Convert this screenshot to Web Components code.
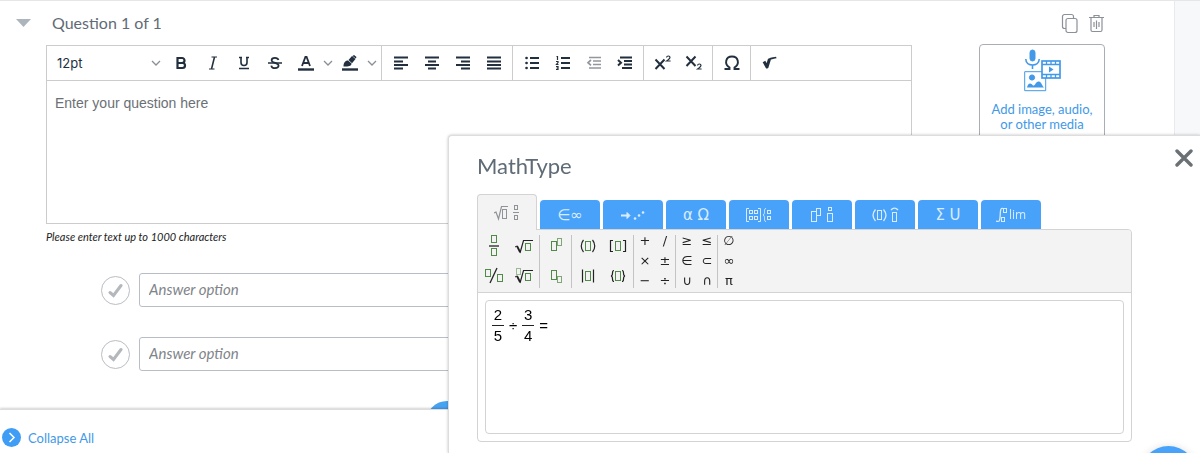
<!DOCTYPE html>
<html lang="en">
<head>
<meta charset="utf-8">
<title>Question editor</title>
<style>
html, body { height: 100%; }
body {
    margin: 0;
    display: flex;
    flex-direction: column;
    overflow: hidden;
    background: #fff;
    color: #5f6b76;
    font-family: Lato, "Liberation Sans", sans-serif;
}
</style>
</head>
<body>

<question-page>
    <question-card heading="Question 1 of 1">
        <rich-editor></rich-editor>
        <answer-list slot="answers">
            <answer-option name="answer1"></answer-option>
            <answer-option name="answer2"></answer-option>
        </answer-list>
    </question-card>
    <media-card slot="media">Add image, audio,<br>or other media</media-card>
</question-page>
<page-footer>Collapse All</page-footer>
<math-dialog heading="MathType"></math-dialog>
<help-button></help-button>

<script>
const svg = (w, h, body) => `<svg width="${w}" height="${h}" viewBox="0 0 ${w} ${h}" fill="none" stroke="currentColor" aria-hidden="true">${body}</svg>`;

const lines = (rows) => svg(16, 16, `<path stroke-width="2" d="${rows}"/>`);

const ICONS = {
    bold: svg(13, 14, '<path stroke-width="2.200" d="M2.500 2h4.500a2.500 2.500 0 0 1 0 5H2.500zM2.500 7H7.500a2.500 2.500 0 0 1 0 5H2.500z"/>'),
    italic: svg(12, 14, '<path stroke-width="1" d="M4.500 1H10M2 13h5.500"/><path stroke-width="1.600" d="M7.500 1 4.500 13"/>'),
    underline: svg(12, 14, '<path stroke-width="1.600" d="M3 1v5.500a3 3 0 0 0 6 0V1M1 1.500h3M8 1.500h3M1 12.500h10"/>'),
    strike: svg(14, 14, '<path stroke-width="1.700" d="M10.500 4C10 2.500 8.700 1.800 7 1.800 5 1.800 3.600 2.800 3.600 4.200 3.600 7.500 10.600 6.200 10.600 9.600c0 1.600-1.500 2.600-3.600 2.600S3.500 11.200 3.300 9.600"/><path stroke-width="1.500" d="M0 7h14"/>'),
    textColor: svg(16, 16, '<path stroke-width="1.800" d="M4 11 7.400 2h1.200L12 11M5.500 8h5"/><path stroke-width="2.400" d="M0 14.500h16"/>'),
    highlight: svg(16, 16, '<path fill="currentColor" stroke="none" d="M1.500 11.500c0-3.500 1.500-6 4.500-6L9.500 8.500c0 2-2 3.500-8 3zM6.500 5l3.500-4 3.500 3L10 8.200zM10.500 1 12 0l2.500 2-.7 1.500z"/><path stroke-width="2.400" d="M0 14.500h16"/>'),
    caret: svg(10, 6, '<path stroke="#8a8f96" stroke-width="1.300" d="m1 1 4 4 4-4"/>'),
    left: lines("M1 2.500h14M1 6.500h9M1 10h14M1 13.500h9"),
    center: lines("M1 2.500h14M4 6.500h8M1 10h14M4 13.500h8"),
    right: lines("M1 2.500h14M6 6.500h9M1 10h14M6 13.500h9"),
    justify: lines("M1 2.500h14M1 6.500h14M1 10h14M1 13.500h14"),
    bullets: svg(16, 16, '<path stroke-width="2" d="M6 3h9M6 8h9M6 13h9"/><path stroke-width="2.600" stroke-linecap="round" d="M2.500 3h.1M2.500 8h.1M2.500 13h.1"/>'),
    numbers: svg(16, 16, '<path stroke-width="2" d="M6 3h9M6 8h9M6 13h9"/><path stroke-width="1.200" d="M1.500 1.500h1V5M1 6.500h2v1L1.500 9.500H3.500M1 11.500h2v3H1M1.500 13H3"/>'),
    outdent: svg(16, 16, '<path stroke="#93979c" stroke-width="1.700" d="M3 2.500h12M7 6h8M7 9.500h8M3 13h12M5 5 2 7.700l3 2.700"/>'),
    indent: svg(16, 16, '<path stroke-width="2" d="M3 2.500h12M7 6h8M7 9.500h8M5 13h10M1 5l3 2.700-3 2.700"/>'),
    sup: svg(18, 16, '<path stroke-width="2" d="m1.500 4.500 9 9.500M10.500 4.500l-9 9.500"/><path stroke-width="1.200" d="M12.500 2.500c.3-2 3.500-2 3.500 0 0 1.200-1.500 2-3.400 3.500h4"/>'),
    sub: svg(18, 16, '<path stroke-width="2" d="m1.500 1.500 9 9.500M10.500 1.500l-9 9.500"/><path stroke-width="1.200" d="M12.500 10.500c.3-2 3.500-2 3.500 0 0 1.200-1.500 2-3.400 3.500h4"/>'),
    omega: svg(16, 16, '<path stroke-width="1.900" d="M.5 14h5v-1.500C0 9 1.500 1.500 8 1.500s8 7.500 2.500 11V14h5"/>'),
    root: svg(16, 16, '<path stroke-width="3" stroke-linejoin="round" d="M2 6.500 5 12 7.500 4"/><path stroke-width="1.700" d="M7.300 4.200c2-1.200 4-.8 7-1.700"/>')
};

// empty slot used in the formula glyphs
const box = (x, y, w = 5, h = 7, c = "#4f8a47") => `<rect x="${x}" y="${y}" width="${w}" height="${h}" stroke="${c}"/>`;
const C = "currentColor";

const FORMULAS = {
    fraction: svg(20, 24, box(7.5, 1.5) + '<path stroke-width="1.300" d="M5 12h10"/>' + box(7.5, 14.5)),
    sqrt: svg(20, 20, '<path d="m1 11 2-1"/><path stroke-width="1.800" d="m3 10 3 6"/><path stroke-width="1.200" d="M6 17 9.500 4.500H19"/>' + box(11.5, 7.5)),
    slash: svg(22, 20, box(2.5, 3.5) + '<path stroke-width="1.300" d="M14 2 7 17"/>' + box(14.5, 8.5)),
    nroot: svg(20, 20, box(2.5, 2.5, 4, 6, "#9bb897") + '<path d="m1 11 2-1"/><path stroke-width="1.800" d="m3 10 3 6"/><path stroke-width="1.200" d="M6 17 9.500 4.500H19"/>' + box(11.5, 7.5)),
    power: svg(20, 20, box(5.5, 5.5, 5, 9) + box(11.5, 2.5, 4, 7, "#7fa579")),
    index: svg(20, 20, box(5.5, 4.5, 5, 9) + box(11.5, 10.5, 4, 6, "#7fa579")),
    parens: svg(20, 20, '<path stroke-width="1.200" d="M5.500 4C2.500 7.500 2.500 12.500 5.500 16M14.500 4c3 3.500 3 8.500 0 12"/>' + box(7.5, 5.5, 5, 9)),
    brackets: svg(20, 20, '<path stroke-width="1.200" d="M5 4.500H2.500v11H5M15 4.500h2.500v11H15"/>' + box(7.5, 5.5, 5, 9)),
    bars: svg(20, 20, '<path stroke-width="1.200" d="M4.500 3.500v13M15.500 3.500v13"/>' + box(7.5, 5.5, 5, 9)),
    braces: svg(20, 20, '<path stroke-width="1.200" d="M6 4.500c-3 0 0 5-3 5.500 3 .5 0 5.500 3 5.500M14 4.500c3 0 0 5 3 5.500-3 .5 0 5.500-3 5.500"/>' + box(7.5, 5.5, 5, 9))
};

const TABS = [
    { label: "General", face: svg(26, 18, '<path stroke-width="1.200" d="m0 9 2-1 2.500 7L7.500 2.500H14"/>' + box(8.5, 5.5, 4, 9, C) + box(20.5, 1.5, 3, 4, C) + '<path d="M19 8.500h6"/>' + box(20.5, 11.5, 3, 4, C)) },
    { label: "Symbols", face: "<span>∈∞</span>" },
    { label: "Arrows", face: svg(26, 18, '<path stroke-width="2" d="M1 9.500h7"/><path fill="currentColor" d="m7 6.500 3 3-3 3z"/><path stroke-width="2.600" stroke-linecap="round" d="M15 12.500h.1M19 9.500h.1M23 6.500h.1"/>') },
    { label: "Greek and letters", face: "<span>α Ω</span>" },
    { label: "Matrices", face: svg(28, 18, '<path d="M4 2.500H1.500v13H4M13 2.500h2.500v13H13"/>' + box(4.5, 4.5, 3, 3, C) + box(9.5, 4.5, 3, 3, C) + box(4.5, 10.5, 3, 3, C) + box(9.5, 10.5, 3, 3, C) + '<path d="M21 2.500c-3 0 0 5.500-3 6.500 3 1 0 6.500 3 6.500"/>' + box(22.5, 4.5, 3, 3, C) + box(22.5, 10.5, 3, 3, C)) },
    { label: "Scripts and layout", face: svg(24, 18, box(1.5, 5.5, 5, 10, C) + box(6.5, 2.5, 4, 7, C) + box(18.5, 1.5, 3, 3, C) + box(17.5, 7.5, 5, 8, C)) },
    { label: "Brackets and accents", face: svg(28, 18, '<path stroke-width="1.300" d="M4.500 3.500c-3 3.500-3 8 0 11.500M12.500 3.500c3 3.500 3 8 0 11.500"/>' + box(6.5, 4.5, 4, 9, C) + '<path stroke-width="1.300" d="M20 4c2-2.500 5-2.500 7 0"/>' + box(21.5, 6.5, 4, 9, C)) },
    { label: "Big operators", face: "<span>Σ U</span>" },
    { label: "Calculus", face: svg(12, 18, '<path stroke-width="1.300" d="M7 2.500c-4-1.500-2 8-3.500 12C3 15.500 1.500 15.500 0 15"/>' + box(7.5, 2.5, 3, 4, C) + box(5.5, 11.5, 3, 4, C)) + '<small>lim</small>' }
];

const define = (name, html) => {
    customElements.define(name, class extends HTMLElement {
        constructor() {
            super();
            this.attachShadow({ mode: "open" });
        }
        connectedCallback() {
            this.shadowRoot.innerHTML = typeof html === "function" ? html(this) : html;
        }
    });
};

define("question-page", `
<style>
:host {
    flex: 1;
    min-height: 0;
    display: flex;
    overflow: hidden;
    box-sizing: border-box;
    border-top: 1px solid #e6e6e6;
}
.main { flex: 1; display: flex; }
.left { flex: 1; max-width: 912px; }
.right { margin-left: auto; padding-right: 69px; }
.rail { width: 25px; background: #f7f8fa; border-left: 1px solid #e8eaed; }
.actions { display: flex; gap: 11px; justify-content: flex-end; padding: 12px 1px 8px 0; height: 23px; }
.actions button { border: 0; padding: 0; background: none; color: #8b9198; }
</style>
<div class="main">
    <div class="left"><slot></slot></div>
    <div class="right">
        <div class="actions">
            <button aria-label="Duplicate">${svg(17, 21, '<path stroke-width="1.200" d="M12.500 5V3.500a2 2 0 0 0-2-2h-7a2 2 0 0 0-2 2v10a2 2 0 0 0 2 2H5"/><rect x="5" y="5.500" width="11" height="14" rx="2" stroke-width="1.200"/>')}</button>
            <button aria-label="Delete">${svg(15, 21, '<path stroke-width="1.200" d="M0 4.500h15M5 4V2.500h5V4M2 4.500v12.500a1.500 1.500 0 0 0 1.500 1.500h8A1.500 1.500 0 0 0 13 17V4.500M5 9v5M7.500 7.500v8.500M10 9v5"/>')}</button>
        </div>
        <slot name="media"></slot>
    </div>
</div>
<div class="rail"></div>
`);

define("question-card", (el) => `
<style>
:host { display: block; }
header { display: flex; align-items: center; gap: 21px; height: 44px; padding-left: 16px; }
header button { border: 0; padding: 0; width: 15px; height: 8px; background: #adb5bc; clip-path: polygon(0 0, 100% 0, 50% 100%); }
h2 { margin: 0; font-size: 16px; line-height: 20px; font-weight: 400; }
.body { padding-left: 46px; }
</style>
<header><button aria-label="Collapse question"></button><h2>${el.getAttribute("heading")}</h2></header>
<div class="body"><slot></slot><slot name="answers"></slot></div>
`);

define("tool-button", (el) => `
<style>
:host { display: flex; align-items: center; color: #222f3e; }
button { display: flex; align-items: center; justify-content: center; width: 31px; height: 34px; border: 0; padding: 0; background: none; color: inherit; }
.more { width: 13px; }
</style>
<button aria-label="${el.getAttribute("icon")}">${ICONS[el.getAttribute("icon")]}</button>
${el.hasAttribute("split") ? `<button class="more" aria-label="${el.getAttribute("icon")} options">${ICONS.caret}</button>` : ""}
`);

define("tool-group", `
<style>
:host { display: flex; align-items: center; padding: 0 3px; border-right: 1px solid #ccc; }
:host(:last-of-type) { border-right: 0; }
</style>
<slot></slot>
`);

define("rich-editor", `
<style>
:host { display: block; }
.editor { border: 1px solid #ccc; }
.toolbar { display: flex; height: 34px; border-bottom: 1px solid #ccc; }
.size { display: flex; align-items: center; width: 116px; }
select { flex: 1; appearance: none; border: 0; padding: 0 0 0 7px; background: none; color: #222f3e; font: 13px/20px Inter, sans-serif; }
.size svg { margin-right: 5px; }
textarea { display: block; box-sizing: border-box; width: 100%; height: 142px; border: 0; padding: 12px 8px; resize: none; outline: 0; background: none; font: 14px/20px "Liberation Sans", sans-serif; }
textarea::placeholder { color: #6b7075; opacity: 1; }
p { margin: 6px 0 0; font-size: 11px; line-height: 14px; font-style: italic; color: #222; }
</style>
<div class="editor">
    <div class="toolbar">
        <tool-group>
            <div class="size"><select aria-label="Font size"><option>12pt</option></select>${ICONS.caret}</div>
            <tool-button icon="bold"></tool-button>
            <tool-button icon="italic"></tool-button>
            <tool-button icon="underline"></tool-button>
            <tool-button icon="strike"></tool-button>
            <tool-button icon="textColor" split></tool-button>
            <tool-button icon="highlight" split></tool-button>
        </tool-group>
        <tool-group>
            <tool-button icon="left"></tool-button>
            <tool-button icon="center"></tool-button>
            <tool-button icon="right"></tool-button>
            <tool-button icon="justify"></tool-button>
        </tool-group>
        <tool-group>
            <tool-button icon="bullets"></tool-button>
            <tool-button icon="numbers"></tool-button>
            <tool-button icon="outdent"></tool-button>
            <tool-button icon="indent"></tool-button>
        </tool-group>
        <tool-group>
            <tool-button icon="sup"></tool-button>
            <tool-button icon="sub"></tool-button>
        </tool-group>
        <tool-group><tool-button icon="omega"></tool-button></tool-group>
        <tool-group><tool-button icon="root"></tool-button></tool-group>
    </div>
    <textarea aria-label="Question" placeholder="Enter your question here"></textarea>
</div>
<p>Please enter text up to 1000 characters</p>
`);

define("answer-list", `
<style>
:host { display: flex; flex-direction: column; gap: 30px; padding: 29px 120px 0 55px; }
button { align-self: center; flex: none; width: 42px; height: 42px; border: 0; border-radius: 50%; padding: 0; background: #48a2f2; color: #fff; }
</style>
<slot></slot>
<button aria-label="Add answer">${svg(16, 16, '<path stroke-width="2" d="M8 1v14M1 8h14"/>')}</button>
`);

define("answer-option", (el) => `
<style>
:host { display: flex; align-items: center; gap: 9px; }
button { display: flex; align-items: center; justify-content: center; flex: none; width: 29px; height: 29px; border: 1px solid #b9bec4; border-radius: 50%; padding: 0; background: #fff; color: #b4b8bd; }
input { flex: 1; min-width: 0; box-sizing: border-box; height: 34px; border: 1px solid #b9bec6; border-radius: 3px; padding: 0 9px 3px; outline: 0; font: italic 15px/20px Lato, sans-serif; }
input::placeholder { color: #808489; opacity: 1; }
</style>
<button aria-label="Mark as correct">${svg(15, 15, '<path stroke-width="3" stroke-linecap="round" d="m2 9.500 3.500 3L13 2.500"/>')}</button>
<input name="${el.getAttribute("name")}" aria-label="Answer option" placeholder="Answer option">
`);

define("media-card", `
<style>
:host { display: block; }
button { display: flex; flex-direction: column; align-items: center; gap: 10px; box-sizing: border-box; width: 126px; height: 120px; border: 1px solid #a9aeb4; border-radius: 4px; padding: 4px 0; background: #fff; color: #4299e8; font: 13px/15px Lato, sans-serif; }
</style>
<button>
${svg(37, 43, `
    <rect x="6" y="1" width="5" height="11" rx="2.500" fill="currentColor"/>
    <path stroke-width="1.600" d="M1.800 10c0 8 13.400 8 13.400 0M8.500 16v4"/>
    <path fill="#fff" d="M.7 22.700h21v19h-21z"/>
    <circle cx="8" cy="28.500" r="2.600" fill="currentColor"/>
    <path fill="currentColor" stroke="none" d="M3 38.500c1-5 4-5 6-2 2 1 3-5 6-4 2 0 3 4 5 6z"/>
    <rect x="18" y="12" width="18" height="17" fill="#fff" stroke-width="1.700"/>
    <path stroke-width="1.300" d="M18 15.500h18M18 25.500h18M22.500 12v3M27 12v3M31.500 12v3M22.500 26v3M27 26v3M31.500 26v3"/>
    <path fill="currentColor" stroke="none" d="m25 17.500 4.500 3-4.500 3z"/>`)}
    <span><slot></slot></span>
</button>
`);

define("page-footer", `
<style>
:host { position: relative; display: flex; align-items: center; flex: none; height: 44px; background: #fff; border-top: 1px solid #ddd; box-shadow: 0 -1px 2px rgba(0, 0, 0, 0.18); box-sizing: border-box; }
a { display: flex; align-items: center; gap: 7px; padding: 12px 0 0 2px; color: #4299e8; font-size: 13px; line-height: 18px; text-decoration: none; }
</style>
<a href="#">${svg(19, 19, '<circle cx="9.500" cy="9.500" r="9.500" fill="#3f9df5" stroke="none"/><path stroke="#fff" stroke-width="1.500" d="m7.500 5 4.500 4.500L7.500 14"/>')}<slot></slot></a>
`);

define("math-tab", (el) => {
    const tab = TABS[el.getAttribute("index")];
    return `
<style>
:host { display: block; width: 60px; }
button { display: flex; align-items: center; justify-content: center; gap: 1px; width: 100%; height: 29px; border: 0; border-radius: 4px 4px 0 0; padding: 0; background: #48a2f9; color: #d9ecff; font: 15px/20px "DejaVu Sans", sans-serif; }
small { font: 12px/18px "Open Sans", sans-serif; }
:host([active]) { position: relative; }
:host([active]) button { height: 36px; margin-bottom: -1px; border: 1px solid #d3d3d3; border-bottom: 0; background: #f3f3f3; color: #8f9296; }
</style>
<button role="tab" aria-label="${tab.label}" aria-selected="${el.hasAttribute("active")}">${tab.face}</button>`;
});

define("symbol-group", (el) => {
    const items = el.getAttribute("items").split(" ");
    const big = el.hasAttribute("big");
    return `
<style>
:host { display: flex; align-items: center; }
.cells { display: grid; grid-template-columns: repeat(${el.getAttribute("cols")}, ${big ? 30 : 20}px); grid-auto-rows: ${big ? 30 : 20}px; padding-left: 1px; }
button { display: flex; align-items: center; justify-content: center; border: 0; padding: 0; background: none; color: #222; font: 13px/20px "DejaVu Sans", sans-serif; }
i { width: 1px; height: 53px; background: #c4c4c4; }
:host(:last-of-type) i { display: none; }
</style>
<div class="cells">${items.map((item) => `<button${big ? ` aria-label="${item}"` : ""}>${big ? FORMULAS[item] : item}</button>`).join("")}</div><i></i>`;
});

define("math-fraction", `
<style>
:host { display: inline-flex; flex-direction: column; align-items: center; width: 12px; }
::slotted(*) { line-height: 20px; }
hr { width: 100%; margin: 0; border: 0; border-top: 1px solid #222; }
</style>
<slot name="top"></slot><hr><slot name="bottom"></slot>
`);

define("math-dialog", (el) => `
<style>
:host { position: fixed; top: 135px; right: 0; bottom: 0; left: 448px; display: block; box-sizing: border-box; border-top: 1px solid #ddd; border-left: 1px solid #ddd; border-radius: 4px 0 0 0; padding: 0 68px 0 28px; background: #fff; box-shadow: 0 0 3px rgba(0, 0, 0, 0.25); }
header { display: flex; align-items: center; justify-content: space-between; height: 58px; margin-right: -61px; }
h1 { margin: 2px 0 0; font-size: 22px; line-height: 28px; font-weight: 400; }
header button { display: flex; border: 0; padding: 0; margin-bottom: 14px; background: none; color: #6b7075; }
.tabs { display: flex; align-items: flex-end; gap: 3px; height: 35px; }
.box { border: 1px solid #d3d3d3; border-radius: 0 4px 4px 4px; }
.panel { display: flex; height: 62px; border-bottom: 1px solid #d3d3d3; border-radius: 0 4px 0 0; background: #f3f3f3; }
.formula { display: flex; align-items: flex-start; gap: 5px; box-sizing: border-box; height: 134px; margin: 7px; border: 1px solid #d3d3d3; border-radius: 4px; padding: 4px 6px; color: #000; font: 15px/41px "Liberation Sans", sans-serif; }
</style>
<header><h1>${el.getAttribute("heading")}</h1><button aria-label="Close">${svg(18, 18, '<path stroke-width="3.400" stroke-linecap="round" d="m2 2 14 14M16 2 2 16"/>')}</button></header>
<div class="tabs" role="tablist">${TABS.map((tab, i) => `<math-tab index="${i}"${i === 0 ? " active" : ""}></math-tab>`).join("")}</div>
<div class="box">
    <div class="panel">
        <symbol-group big cols="2" items="fraction sqrt slash nroot"></symbol-group>
        <symbol-group big cols="1" items="power index"></symbol-group>
        <symbol-group big cols="2" items="parens brackets bars braces"></symbol-group>
        <symbol-group cols="2" items="+ / × ± − ÷"></symbol-group>
        <symbol-group cols="2" items="≥ ≤ ∈ ⊂ ∪ ∩"></symbol-group>
        <symbol-group cols="1" items="∅ ∞ π"></symbol-group>
    </div>
    <div class="formula">
        <math-fraction><span slot="top">2</span><span slot="bottom">5</span></math-fraction>
        <span>÷</span>
        <math-fraction><span slot="top">3</span><span slot="bottom">4</span></math-fraction>
        <span>=</span>
    </div>
</div>
`);

define("help-button", `
<style>
:host { position: fixed; right: 3px; bottom: -50px; display: block; }
button { display: block; width: 57px; height: 57px; border: 0; border-radius: 50%; background: #48a2f9; color: #fff; box-shadow: 0 1px 8px rgba(0, 0, 0, 0.15); }
</style>
<button aria-label="Help"></button>
`);
</script>
</body>
</html>
